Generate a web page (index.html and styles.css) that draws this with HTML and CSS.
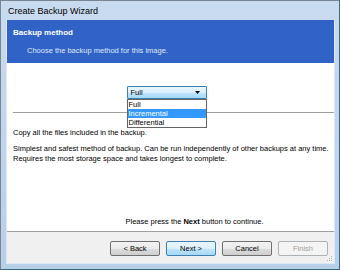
FILE: index.html
```html
<!DOCTYPE html>
<html>
<head lang="en">
    <meta charset="UTF-8">
    <title>Create Backup Wizard</title>
    <link rel="stylesheet" href="styles.css">
</head>
<body>
<div class="window">
    <div class="titlebar">Create Backup Wizard</div>
    <div class="client">
        <div class="banner">
            <div class="banner-title">Backup method</div>
            <div class="banner-sub">Choose the backup method for this image.</div>
        </div>
        <div class="page">
            <div class="combo-row">
                <div class="combo">
                    <span>Full</span>
                    <svg class="arrow" width="5" height="3" viewBox="0 0 5 3"><path d="M0 0H5L2.5 3Z" fill="#000"/></svg>
                    <ul class="combo-list">
                        <li>Full</li>
                        <li class="selected">Incremental</li>
                        <li>Differential</li>
                    </ul>
                </div>
            </div>
            <div class="sep"></div>
            <p class="desc">Copy all the files included in the backup.</p>
            <p class="desc">Simplest and safest method of backup. Can be run independently of other backups at any time.<br>Requires the most storage space and takes longest to complete.</p>
            <p class="hint">Please press the <b>Next</b> button to continue.</p>
        </div>
        <div class="footer">
            <button class="btn">&lt; Back</button>
            <button class="btn focus">Next &gt;</button>
            <button class="btn">Cancel</button>
            <button class="btn disabled">Finish</button>
            <svg class="grip" width="6" height="6" viewBox="0 0 6 6">
                <rect x="4" y="0" width="1" height="1" fill="#b0b0b0"/>
                <rect x="2" y="2" width="1" height="1" fill="#b0b0b0"/>
                <rect x="4" y="2" width="1" height="1" fill="#b0b0b0"/>
                <rect x="0" y="4" width="1" height="1" fill="#b0b0b0"/>
                <rect x="2" y="4" width="1" height="1" fill="#b0b0b0"/>
                <rect x="4" y="4" width="1" height="1" fill="#b0b0b0"/>
            </svg>
        </div>
    </div>
</div>
</body>
</html>
```
FILE: styles.css
```css
*{
    margin: 0;
    padding: 0;
    box-sizing: border-box;
}
html,body{
    width: 100%;
    height: 100%;
    overflow: hidden;
}
body{
    font-family: "Liberation Sans", Arial, sans-serif;
    font-size: 7.5px;
    color: #000;
}
.window{
    width: 340px;
    height: 270px;
    display: flex;
    flex-direction: column;
    background: linear-gradient(#c9dbef, #b8cfe8);
    border-top: 1px solid #7a8594;
    border-left: 1px solid #7a8594;
    border-right: 1px solid #2f6d7a;
    border-bottom: 1px solid #2f6d7a;
}
.titlebar{
    height: 19px;
    line-height: 21px;
    padding-left: 7px;
    font-size: 9px;
    color: #000;
}
.client{
    flex: 1;
    margin: 0 4px 5px 5px;
    display: flex;
    flex-direction: column;
    background: #fff;
    border: 1px solid #dde8f4;
    border-top: none;
}
.banner{
    height: 43px;
    background: #3163c6;
    color: #fff;
    padding: 8px 0 0 6px;
}
.banner-title{
    font-weight: bold;
    font-size: 8px;
}
.banner-sub{
    margin: 9px 0 0 14px;
    color: #dfe8f8;
}
.page{
    flex: 1;
    display: flex;
    flex-direction: column;
    padding: 23px 0 0 6px;
}
.combo-row{
    display: flex;
    justify-content: center;
    padding-right: 14px;
}
.combo{
    position: relative;
    width: 80px;
    height: 13px;
    border: 1px solid #3c7fb1;
    border-radius: 1px;
    background: linear-gradient(#eaf6fd 0%, #d9f0fc 50%, #bee6fd 51%, #a7d9f5 100%);
    display: flex;
    align-items: center;
    padding-left: 3px;
}
.combo span{
    flex: 1;
}
.arrow{
    margin-right: 6px;
}
.combo-list{
    position: absolute;
    left: -1px;
    top: 12px;
    width: 80px;
    list-style: none;
    background: #fff;
    border: 1px solid #646464;
    z-index: 2;
}
.combo-list li{
    height: 9px;
    line-height: 9px;
    padding-left: 1px;
}
.combo-list li.selected{
    background: #3399ff;
    color: #fff;
}
.sep{
    height: 1px;
    background: #a0a0a0;
    margin-top: 13px;
}
.desc{
    margin-top: 15px;
    line-height: 10px;
}
.desc + .desc{
    margin-top: 6px;
}
.hint{
    margin-top: auto;
    margin-bottom: 5px;
    text-align: center;
    padding-left: 42px;
}
.footer{
    position: relative;
    height: 32px;
    background: #f0f0f0;
    border-top: 1px solid #a0a0a0;
    display: flex;
    align-items: flex-start;
    justify-content: flex-end;
    gap: 6px;
    padding: 9px 6px 0 0;
}
.btn{
    width: 50px;
    height: 15px;
    font-family: inherit;
    font-size: 7.5px;
    color: #000;
    border: 1px solid #707070;
    border-radius: 2px;
    background: linear-gradient(#f2f2f2 0%, #ebebeb 50%, #dddddd 51%, #cfcfcf 100%);
}
.btn.focus{
    border-color: #3c7fb1;
    background: linear-gradient(#eaf6fd 0%, #d9f0fc 50%, #bee6fd 51%, #a7d9f5 100%);
}
.btn.disabled{
    color: #a0a0a0;
    border-color: #adb2b5;
    background: #f4f4f4;
}
.grip{
    position: absolute;
    right: 1px;
    bottom: 1px;
}
```
